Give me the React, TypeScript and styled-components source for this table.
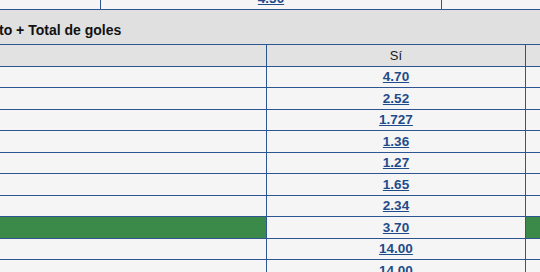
import styled, { createGlobalStyle } from "styled-components";

const GlobalStyle = createGlobalStyle`
  html, body {
    margin: 0;
    padding: 0;
    background: #f5f5f5;
    font-family: "Liberation Sans", Arial, sans-serif;
  }
`;

const BORDER = "#2c5592";

const Page = styled.div`
  width: 540px;
  height: 272px;
  overflow: hidden;
`;

const PrevTable = styled.div`
  display: grid;
  grid-template-columns: 101px 341px 1fr;
  height: 23px;
  margin-top: -13px;
  border-bottom: 1px solid ${BORDER};
  box-sizing: border-box;
`;

const Cell = styled.div<{ $green?: boolean; $last?: boolean }>`
  display: flex;
  align-items: center;
  justify-content: center;
  background: ${(p) => (p.$green ? "#3c8a49" : "#f5f5f5")};
  border-right: ${(p) => (p.$last ? "none" : `1px solid ${BORDER}`)};
  box-sizing: border-box;
  min-width: 0;
`;

const Title = styled.div`
  height: 35px;
  box-sizing: border-box;
  background: #e0e0e0;
  border-bottom: 1px solid ${BORDER};
  display: flex;
  align-items: flex-end;
  padding-bottom: 6px;
  font-size: 14px;
  line-height: 16px;
  font-weight: bold;
  color: #111;
  text-indent: -1px;
`;

const Row = styled.div<{ $head?: boolean }>`
  display: grid;
  grid-template-columns: 267px 259px 1fr;
  height: 21.5px;
  box-sizing: border-box;
  border-bottom: 1px solid ${BORDER};

  & > div {
    background: ${(p) => (p.$head ? "#e2e2e2" : undefined)};
  }
`;

const HeadLabel = styled.span`
  font-size: 13px;
  color: #1a1a1a;
`;

const Odd = styled.a`
  font-size: 13.5px;
  font-weight: bold;
  color: #1f4b8a;
  text-decoration: underline;
  text-underline-offset: 1px;
  cursor: pointer;
`;

const odds = ["4.70", "2.52", "1.727", "1.36", "1.27", "1.65", "2.34", "3.70", "14.00", "14.00"];
const winner = 7;

export default function App() {
  return (
    <Page>
      <GlobalStyle />
      <PrevTable>
        <Cell />
        <Cell>
          <Odd>4.50</Odd>
        </Cell>
        <Cell $last />
      </PrevTable>
      <Title>to + Total de goles</Title>
      <Row $head>
        <Cell />
        <Cell>
          <HeadLabel>Sí</HeadLabel>
        </Cell>
        <Cell $last />
      </Row>
      {odds.map((o, i) => (
        <Row key={i}>
          <Cell $green={i === winner} />
          <Cell>
            <Odd>{o}</Odd>
          </Cell>
          <Cell $green={i === winner} $last />
        </Row>
      ))}
    </Page>
  );
}
